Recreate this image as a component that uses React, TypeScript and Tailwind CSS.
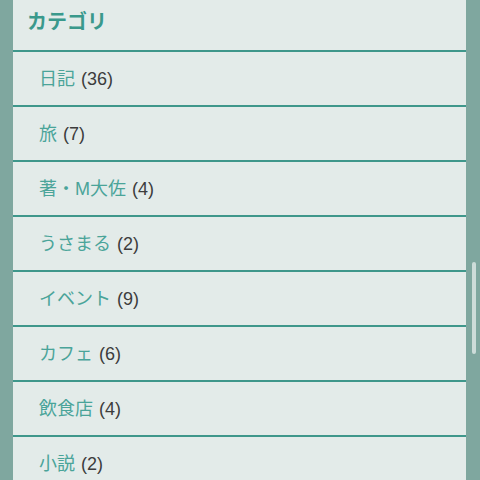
import React from "react";

const categories = [
  { name: "日記", count: 36 },
  { name: "旅", count: 7 },
  { name: "著・M大佐", count: 4 },
  { name: "うさまる", count: 2 },
  { name: "イベント", count: 9 },
  { name: "カフェ", count: 6 },
  { name: "飲食店", count: 4 },
  { name: "小説", count: 2 },
];

export default function App() {
  return (
    <div
      className="relative flex h-[480px] w-[480px] overflow-hidden bg-[#7fa79f]"
      style={{ fontFamily: '"Liberation Sans", "Noto Sans CJK JP", sans-serif' }}
    >
      <div className="ml-[13px] w-[453px] bg-[#e3ebe9]">
        {/* Header */}
        <div className="flex h-[52px] items-start border-b-2 border-[#3f978b] pl-[14px] pt-[7px]">
          <h2 className="text-[20px] font-bold leading-[30px] text-[#3a998c]">カテゴリ</h2>
        </div>

        {/* Category list */}
        <ul>
          {categories.map((c) => (
            <li
              key={c.name}
              className="flex h-[55px] items-center border-b-2 border-[#3f978b] pl-[26px] pt-[1px] text-[18px]"
            >
              <span className="text-[#4aa499]">{c.name}</span>
              <span className="ml-[6px] text-[#3c3c3c]">({c.count})</span>
            </li>
          ))}
        </ul>
      </div>

      {/* Scrollbar thumb */}
      <div className="absolute left-[472px] top-[262px] h-[92px] w-[4px] rounded-full bg-[#cddcd9]" />
    </div>
  );
}
